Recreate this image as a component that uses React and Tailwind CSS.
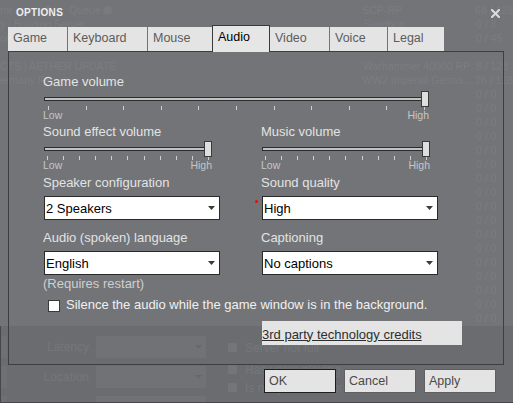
import React from "react";

const tabs = [
  { l: "Game", cls: "w-[59px]" },
  { l: "Keyboard", cls: "w-[79px] ml-[1px]" },
  { l: "Mouse", cls: "w-[64px] ml-[1px]" },
  { l: "Audio", cls: "w-[58px]", active: true },
  { l: "Video", cls: "w-[59px]" },
  { l: "Voice", cls: "w-[57px] ml-[1px]" },
  { l: "Legal", cls: "w-[56px] ml-[1px]" },
];

function Label({ children }) {
  return <div className="text-[13px] leading-[15px] text-[#e3e3e3] whitespace-nowrap">{children}</div>;
}

function Slider({ wCls, padCls }) {
  const ticks = Array.from({ length: 11 });
  return (
    <div className={`flex flex-col ${wCls}`}>
      <div className="relative mt-[2px] ml-[1px] h-[16px] flex items-center">
        <div className="h-[4px] w-full border border-[#2c2c2c] bg-[#c2c2c2]" />
        <div className="absolute right-0 top-0 w-[8px] h-[16px] bg-[#dedede] border border-[#3a3a3a]" />
      </div>
      <div className={`flex justify-between h-[4px] -mt-[1px] ml-[1px] ${padCls}`}>
        {ticks.map((_, i) => (
          <div key={i} className="w-[1px] h-full bg-[#cfcfcf]" />
        ))}
      </div>
      <div className="flex justify-between text-[10.5px] leading-[10px] text-[#c6c6c6]">
        <span>Low</span>
        <span>High</span>
      </div>
    </div>
  );
}

function Select({ children, mark }) {
  return (
    <div className="relative mt-[6px] ml-[1px] w-[176px] h-[24px] bg-white border border-[#2a2a2a] flex items-center justify-between pl-[1px] pr-[4px]">
      {mark && <div className="absolute -left-[8px] top-[3px] w-[3px] h-[3px] rounded-full bg-[#e01010]" />}
      <span className="text-[13px] leading-[15px] text-black">{children}</span>
      <svg width="7" height="4" viewBox="0 0 7 4">
        <path d="M0 0H7L3.5 4Z" fill="#3a3a3a" />
      </svg>
    </div>
  );
}

function GhostRow({ left, name, count }) {
  return (
    <div className="flex h-[14px] whitespace-nowrap">
      <div className="w-[363px] overflow-hidden">{left}</div>
      <div className="w-[113px] overflow-hidden">{name}</div>
      <div>{count}</div>
    </div>
  );
}

function Ghost() {
  const rows = [
    {
      left: (
        <div className="flex items-center">
          <span>tor</span>
          <span className="ml-[34px] w-[5px] h-[8px] bg-[#787a7e]" />
          <span className="ml-[18px]">Queue</span>
          <span className="ml-[2px] w-[9px] h-[9px] rounded-full bg-[#787a7e]" />
        </div>
      ),
      name: "SCP-RP",
      count: "68 / 128",
    },
    { left: "y | Building Server", name: "Sandbox", count: "0 / 8" },
    { left: "or", name: "", count: "0 / 45" },
    { left: "", name: "", count: "" },
    { left: "CTS | AETHER UPDATE", name: "Warhammer 40000 RP", count: "8 / 128" },
    { left: "ermany RP", name: "WW2 Imperial Germa...", count: "26 / 128" },
  ];
  for (let i = 0; i < 17; i++) rows.push({ left: "", name: "", count: "0 / 0" });
  return (
    <div className="absolute inset-0 flex flex-col text-[10.5px] leading-[14px] text-[#7b7d81]">
      <div className="h-[326px] shrink-0 pt-[3px] flex flex-col overflow-hidden">
        {rows.map((r, i) => (
          <GhostRow key={i} {...r} />
        ))}
      </div>
      <div className="flex-1 min-h-0 overflow-hidden flex bg-[#6a6c70] border-l border-b border-[#45474a] text-[#75777b] text-[12px]">
        <div className="flex flex-col pt-[10px] gap-[8px]">
          {["Latency", "Location", ""].map((l, i) => (
            <div key={i} className="flex items-center h-[22px] shrink-0">
              <div className="w-[6px] h-[22px] bg-[#6e7074]" />
              <div className="w-[82px] text-right">{l}</div>
              <div className="ml-[7px] w-[110px] h-[22px] bg-[#707276] flex items-center justify-end pr-[4px]">
                <svg width="7" height="4" viewBox="0 0 7 4">
                  <path d="M0 0H7L3.5 4Z" fill="#66686c" />
                </svg>
              </div>
            </div>
          ))}
        </div>
        <div className="ml-[22px] flex flex-col pt-[17px]">
          <div className="flex items-center h-[9px]">
            <div className="w-[9px] h-[9px] bg-[#737579]" />
            <span className="ml-[8px]">Server not full</span>
          </div>
          <div className="flex items-center h-[9px] mt-[13px]">
            <div className="w-[9px] h-[9px] bg-[#737579]" />
            <span className="ml-[8px]">Has users playing</span>
          </div>
          <div className="flex items-center h-[9px] mt-[9px]">
            <div className="w-[9px] h-[9px] bg-[#737579]" />
            <span className="ml-[8px]">Is not password protected</span>
          </div>
        </div>
      </div>
    </div>
  );
}

export default function App() {
  return (
    <div className="relative w-[513px] h-[403px] overflow-hidden bg-[#727478] font-['Liberation_Sans',Arial,sans-serif]">
      <Ghost />
      <div className="relative flex flex-col">
        <div className="h-[25px] flex justify-between items-start">
          <div className="ml-[16px] mt-[8px] text-[10px] leading-[10px] font-bold tracking-[0.3px] text-[#eeeeee]">
            OPTIONS
          </div>
          <svg className="mr-[13px] mt-[9px]" width="9" height="9" viewBox="0 0 9 9">
            <path d="M1 1L8 8M8 1L1 8" stroke="#dcdcdc" strokeWidth="2" strokeLinecap="square" />
          </svg>
        </div>
        <div className="h-[26px] flex items-end pl-[8px]">
          {tabs.map((t) =>
            t.active ? (
              <div
                key={t.l}
                className={`${t.cls} relative z-10 h-[27px] -mb-[1px] bg-[#e6e6e6] border border-b-0 border-[#3a3a3a] flex items-center pl-[5px] pb-[3px] text-[12.5px] leading-[15px] text-black`}
              >
                {t.l}
              </div>
            ) : (
              <div
                key={t.l}
                className={`${t.cls} h-[24px] bg-[#e4e4e4] flex items-center pl-[5px] pb-[2px] text-[12.5px] leading-[15px] text-[#5c5c5c]`}
              >
                {t.l}
              </div>
            )
          )}
        </div>
        <div className="ml-[8px] w-[496px] h-[314px] border border-[#3c3e40] flex flex-col pl-[34px] pt-[22px]">
          <Label>Game volume</Label>
          <Slider wCls="w-[386px]" padCls="px-[4px]" />
          <div className="flex mt-[4px]">
            <div className="w-[218px]">
              <Label>Sound effect volume</Label>
              <Slider wCls="w-[169px]" padCls="px-[3px]" />
            </div>
            <div>
              <Label>Music volume</Label>
              <Slider wCls="w-[169px]" padCls="px-[3px]" />
            </div>
          </div>
          <div className="flex mt-[5px]">
            <div className="w-[218px]">
              <Label>Speaker configuration</Label>
              <Select>2 Speakers</Select>
            </div>
            <div>
              <Label>Sound quality</Label>
              <Select mark>High</Select>
            </div>
          </div>
          <div className="flex mt-[10px]">
            <div className="w-[218px]">
              <Label>Audio (spoken) language</Label>
              <Select>English</Select>
              <div className="mt-[1px] text-[13px] leading-[15px] text-[#cfcfcf]">(Requires restart)</div>
            </div>
            <div>
              <Label>Captioning</Label>
              <Select>No captions</Select>
            </div>
          </div>
          <div className="flex items-start h-[15px] mt-[6px] ml-[5px]">
            <div className="mt-[3px] w-[12px] h-[12px] bg-white border border-[#3a3a3a]" />
            <span className="ml-[6px] text-[13px] leading-[15px] text-[#f0f0f0] whitespace-nowrap">
              Silence the audio while the game window is in the background.
            </span>
          </div>
          <div className="mt-[9px] ml-[219px] w-[200px] h-[24px] bg-[#e4e4e4] flex items-center pt-[2px]">
            <span className="text-[13px] leading-[15px] text-[#2e2e2e] underline">3rd party technology credits</span>
          </div>
        </div>
        <div className="mt-[4px] flex justify-end gap-[8px] pr-[17px]">
          <div className="w-[72px] h-[24px] bg-[#e4e4e4] border border-[#1e1e1e] flex items-center pl-[4px] text-[12.5px] text-[#4a4a4a]">
            OK
          </div>
          <div className="w-[72px] h-[24px] bg-[#e4e4e4] border border-[#606060] flex items-center pl-[4px] text-[12.5px] text-[#4a4a4a]">
            Cancel
          </div>
          <div className="w-[72px] h-[24px] bg-[#e4e4e4] border border-[#606060] flex items-center pl-[4px] text-[12.5px] text-[#4a4a4a]">
            Apply
          </div>
        </div>
      </div>
    </div>
  );
}
